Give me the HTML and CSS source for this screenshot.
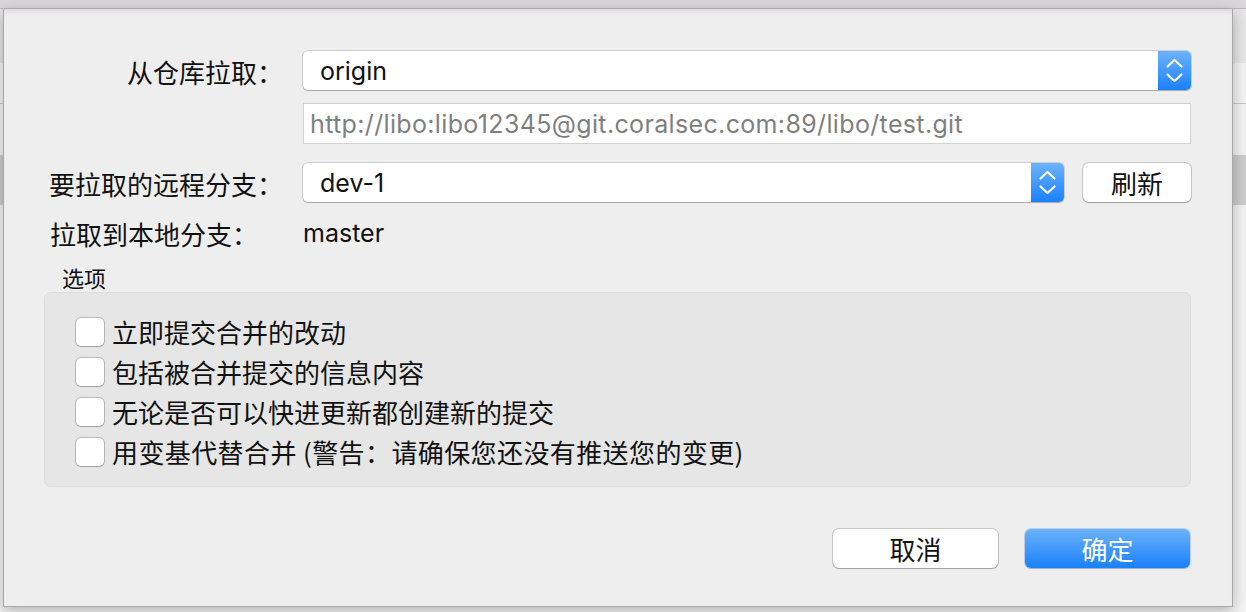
FILE: index.html
```html
<!DOCTYPE html>
<html lang="zh-CN">
<head>
<meta charset="utf-8">
<title>拉取</title>
<link rel="stylesheet" href="styles.css">
</head>
<body>
<div class="backdrop">
  <div class="bg-titlebar"></div>
  <div class="bg-row bg-toolbar"></div>
  <div class="bg-row bg-r1"></div>
  <div class="bg-row bg-r2"></div>
  <div class="bg-row bg-sel"></div>
  <div class="bg-row bg-rest"></div>
</div>

<div class="sheet">
  <div class="form">
    <div class="row row-remote">
      <div class="lbl lbl-right">从仓库拉取：</div>
      <div class="popup">
        <span class="popup-text">origin</span>
        <span class="stepper">
          <svg width="33" height="39" viewBox="0 0 33 39"><path d="M9.5 15.5 L16.5 9 L23.5 15.5 M9.5 23.5 L16.5 30 L23.5 23.5" fill="none" stroke="#fff" stroke-width="2.2" stroke-linecap="round" stroke-linejoin="round"/></svg>
        </span>
      </div>
    </div>

    <div class="row row-url">
      <div class="lbl"></div>
      <div class="urlfield">http://libo:libo12345@git.coralsec.com:89/libo/test.git</div>
    </div>

    <div class="row row-branch">
      <div class="lbl lbl-right">要拉取的远程分支：</div>
      <div class="popup popup-branch">
        <span class="popup-text">dev-1</span>
        <span class="stepper">
          <svg width="33" height="39" viewBox="0 0 33 39"><path d="M9.5 15.5 L16.5 9 L23.5 15.5 M9.5 23.5 L16.5 30 L23.5 23.5" fill="none" stroke="#fff" stroke-width="2.2" stroke-linecap="round" stroke-linejoin="round"/></svg>
        </span>
      </div>
      <button class="btn btn-refresh">刷新</button>
    </div>

    <div class="row row-local">
      <div class="lbl lbl-left">拉取到本地分支：</div>
      <div class="value">master</div>
    </div>
  </div>

  <div class="opt-title">选项</div>
  <div class="group">
    <label class="check"><span class="box"></span><span>立即提交合并的改动</span></label>
    <label class="check"><span class="box"></span><span>包括被合并提交的信息内容</span></label>
    <label class="check"><span class="box"></span><span>无论是否可以快进更新都创建新的提交</span></label>
    <label class="check"><span class="box"></span><span class="check-warn">用变基代替合并 (警告：请确保您还没有推送您的变更)</span></label>
  </div>

  <div class="actions">
    <button class="btn btn-cancel">取消</button>
    <button class="btn btn-ok">确定</button>
  </div>
</div>
</body>
</html>
```

FILE: styles.css
```css
* { box-sizing: border-box; }

html, body {
  margin: 0;
  padding: 0;
  width: 1246px;
  height: 612px;
  overflow: hidden;
  font-family: "Inter", "Noto Sans CJK SC", sans-serif;
  color: #111;
}

/* background window behind the sheet */
.backdrop {
  display: flex;
  flex-direction: column;
  height: 612px;
}
.bg-titlebar {
  height: 9px;
  background: #d9d7d9;
  border-bottom: 1px solid #b9b9b9;
}
.bg-toolbar { height: 54px; background: #e6e6e6; }
.bg-r1 { height: 41px; background: #f4f4f4; border-bottom: 1px solid #c9c9c9; }
.bg-r2 { height: 51px; background: #f4f4f4; }
.bg-sel { height: 50px; background: #cdcdcd; }
.bg-rest { flex: 1; background: #f4f4f4; }

/* the sheet dialog lies over the window */
.sheet {
  position: absolute;
  left: 3px;
  top: 9px;
  width: 1230px;
  height: 598px;
  background: #eeeeee;
  border: 1px solid #a8a8a8;
  border-top: none;
  box-shadow: 0 4px 14px rgba(0, 0, 0, 0.28), inset 0 6px 6px -5px rgba(0, 0, 0, 0.12);
  padding: 42px 41px 0 40px;
  display: flex;
  flex-direction: column;
}

.form {
  display: flex;
  flex-direction: column;
}
.row {
  display: flex;
  align-items: center;
  gap: 20px;
}
.row-remote { height: 39px; }
.row-url { height: 41px; margin-top: 13px; }
.row-branch { height: 39px; margin-top: 19px; }
.row-local { height: 42px; margin-top: 10px; }

.lbl {
  width: 239px;
  flex: none;
  font-family: "Noto Sans CJK SC", sans-serif;
  font-size: 26px;
  line-height: 32px;
  color: #111;
  white-space: nowrap;
  margin-top: 2px;
}
.lbl-right { text-align: right; }
.lbl-left { padding-left: 6px; }

.popup {
  flex: 1;
  height: 39px;
  background: #fff;
  border-radius: 5px;
  box-shadow: 0 0 0 1px rgba(0, 0, 0, 0.13), 0 1px 1px rgba(0, 0, 0, 0.18);
  display: flex;
  align-items: center;
  justify-content: space-between;
  overflow: hidden;
}
.popup-text {
  font-size: 25px;
  padding-left: 17px;
  color: #111;
}
.stepper {
  width: 33px;
  height: 39px;
  background: linear-gradient(#6db3fb, #1a80fb);
  display: flex;
}

.urlfield {
  flex: 1;
  height: 41px;
  background: #fff;
  border: 1px solid #d2d2d2;
  font-size: 25px;
  letter-spacing: 0.35px;
  color: #7f7f7f;
  padding-left: 6px;
  display: flex;
  align-items: center;
  white-space: nowrap;
}

.value {
  font-size: 25px;
  color: #111;
}

.btn {
  height: 39px;
  border: none;
  border-radius: 6px;
  font-family: "Noto Sans CJK SC", sans-serif;
  font-size: 26px;
  line-height: 39px;
  padding: 0;
  cursor: default;
}
.btn-refresh {
  width: 108px;
  flex: none;
  margin-left: -1px;
  background: #fff;
  color: #111;
  box-shadow: 0 0 0 1px rgba(0, 0, 0, 0.16), 0 1px 1px rgba(0, 0, 0, 0.2);
}

.opt-title {
  font-family: "Noto Sans CJK SC", sans-serif;
  font-size: 22px;
  line-height: 26px;
  margin-top: 10px;
  padding-left: 18px;
  color: #111;
}

.group {
  margin-top: 2px;
  height: 195px;
  background: #e6e6e6;
  border: 1px solid #dcdcdc;
  border-radius: 7px;
  padding: 25px 0 0 31px;
  display: flex;
  flex-direction: column;
  gap: 13px;
}
.check {
  display: flex;
  align-items: center;
  gap: 8px;
  height: 27px;
  font-family: "Noto Sans CJK SC", sans-serif;
  font-size: 26px;
  color: #111;
  white-space: nowrap;
}
.check-warn { letter-spacing: 0.4px; }
.box {
  width: 28px;
  height: 28px;
  background: #fff;
  border-radius: 5px;
  box-shadow: 0 0 0 1px rgba(0, 0, 0, 0.2), 0 1px 1px rgba(0, 0, 0, 0.12);
  flex: none;
}

.actions {
  margin-top: 42px;
  display: flex;
  justify-content: flex-end;
  gap: 27px;
  padding-right: 1px;
}
.btn-cancel {
  width: 165px;
  background: #fff;
  color: #111;
  box-shadow: 0 0 0 1px rgba(0, 0, 0, 0.16), 0 1px 1px rgba(0, 0, 0, 0.2);
}
.btn-ok {
  width: 165px;
  background: linear-gradient(#6ab2fa, #1a80fb);
  color: #fff;
  box-shadow: 0 0 0 1px rgba(0, 80, 200, 0.2), 0 1px 1px rgba(0, 0, 0, 0.15);
}
```
